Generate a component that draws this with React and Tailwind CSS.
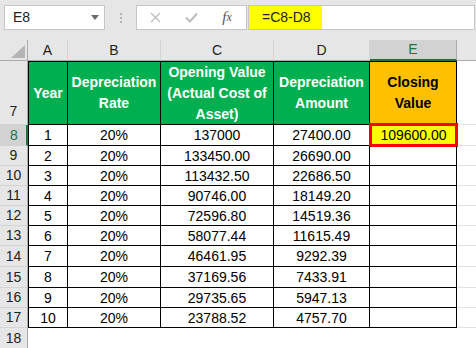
const rows = [
  ['1', '20%', '137000', '27400.00', '109600.00'],
  ['2', '20%', '133450.00', '26690.00', ''],
  ['3', '20%', '113432.50', '22686.50', ''],
  ['4', '20%', '90746.00', '18149.20', ''],
  ['5', '20%', '72596.80', '14519.36', ''],
  ['6', '20%', '58077.44', '11615.49', ''],
  ['7', '20%', '46461.95', '9292.39', ''],
  ['8', '20%', '37169.56', '7433.91', ''],
  ['9', '20%', '29735.65', '5947.13', ''],
  ['10', '20%', '23788.52', '4757.70', ''],
]

const heights = ['h-[21px]', 'h-[20px]', 'h-[20px]', 'h-[20px]', 'h-[20px]', 'h-[20px]', 'h-[21px]', 'h-[21px]', 'h-[20px]', 'h-[20px]']
const widths = ['w-[40px]', 'w-[93px]', 'w-[113px]', 'w-[96px]', 'w-[87px]']
const letters = ['A', 'B', 'C', 'D', 'E']

function Toolbar() {
  return (
    <div className="flex h-[40px] items-start bg-[#e6e6e6] pt-[5px] pl-[4px] pr-px">
      <div className="flex h-[25px] w-[101px] shrink-0 items-center justify-between border border-[#c6c6c6] bg-white pl-[8px] pr-[5px] text-[14px] text-[#222]">
        <span>E8</span>
        <svg width="8" height="5" viewBox="0 0 8 5">
          <polygon points="0,0 8,0 4,5" fill="#6a6a6a" />
        </svg>
      </div>
      <div className="flex h-[25px] w-[31px] shrink-0 flex-col items-center justify-center gap-[2px]">
        <span className="h-[2px] w-[2px] bg-[#b4b4b4]" />
        <span className="h-[2px] w-[2px] bg-[#b4b4b4]" />
        <span className="h-[2px] w-[2px] bg-[#b4b4b4]" />
      </div>
      <div className="flex h-[25px] w-[111px] shrink-0 items-center border border-[#c6c6c6] bg-white">
        <div className="flex w-[36px] justify-center">
          <svg width="11" height="11" viewBox="0 0 11 11">
            <path d="M1 1 L10 10 M10 1 L1 10" stroke="#bdbdbd" strokeWidth="1.2" />
          </svg>
        </div>
        <div className="flex w-[36px] justify-center">
          <svg width="13" height="11" viewBox="0 0 13 11">
            <path d="M1 5.5 L5 9.5 L12 1.5" stroke="#bdbdbd" strokeWidth="2" fill="none" />
          </svg>
        </div>
        <div className="flex w-[36px] justify-center font-['Liberation_Serif',serif] text-[15px] italic text-[#555]">
          <span>f</span>
          <span className="text-[12px] leading-[22px]">x</span>
        </div>
      </div>
      <div className="ml-[1px] flex h-[25px] flex-1 border border-[#c6c6c6] bg-white">
        <div className="flex w-[73px] items-center bg-[#ffff00] pl-[13px] text-[14px] text-[#222]">=C8-D8</div>
      </div>
    </div>
  )
}

function ColumnHeaders() {
  return (
    <div className="flex h-[21px] bg-[#e6e6e6] text-[14px] text-[#222]">
      <div className="flex w-[28px] shrink-0 items-end justify-end border-r border-b border-[#ababab] pr-[2px] pb-[2px]">
        <svg width="14" height="13" viewBox="0 0 14 13">
          <polygon points="14,0 14,13 0,13" fill="#b4b4b4" />
        </svg>
      </div>
      {letters.map((l, i) => (
        <div
          key={l}
          className={
            l === 'E'
              ? `${widths[i]} flex shrink-0 items-center justify-center border-r border-b-2 border-r-[#ababab] border-b-[#217346] bg-[#d2d2d2] text-[#217346]`
              : `${widths[i]} flex shrink-0 items-center justify-center border-r border-b border-r-[#d4d4d4] border-b-[#ababab]`
          }
        >
          {l}
        </div>
      ))}
      <div className="flex-1 border-b border-[#ababab]" />
    </div>
  )
}

function HeaderRow() {
  const head = [
    ['Year'],
    ['Depreciation', 'Rate'],
    ['Opening Value', '(Actual Cost of', 'Asset)'],
    ['Depreciation', 'Amount'],
    ['Closing', 'Value'],
  ]
  return (
    <div className="flex h-[64px]">
      <div className="flex w-[28px] shrink-0 items-end justify-center border-r border-b border-r-[#ababab] border-b-[#d4d4d4] bg-[#e6e6e6] pb-[2px] text-[14px] text-[#222]">
        7
      </div>
      {head.map((lines, i) => (
        <div
          key={i}
          className={`${widths[i]} flex shrink-0 flex-col items-center justify-center border-t border-r border-b border-black text-center text-[14px] font-bold leading-[21px] ${
            i === 0 ? 'border-l' : ''
          } ${i === 4 ? 'bg-[#ffc000] text-black' : 'bg-[#00b050] text-white'}`}
        >
          {lines.map((t) => (
            <span key={t} className="whitespace-nowrap">
              {t}
            </span>
          ))}
        </div>
      ))}
      <div className="flex-1 border-b border-[#e1e1e1] bg-white" />
    </div>
  )
}

export default function App() {
  return (
    <div className="h-[348px] w-[476px] overflow-hidden bg-white font-['Liberation_Sans',Arial,sans-serif]">
      <Toolbar />
      <ColumnHeaders />
      <HeaderRow />
      {rows.map((r, ri) => {
        const selected = ri === 0
        return (
          <div key={ri} className={`flex ${heights[ri]}`}>
            <div
              className={
                selected
                  ? 'flex w-[28px] shrink-0 items-center justify-center border-r-2 border-b border-r-[#217346] border-b-[#d4d4d4] bg-[#d2d2d2] pl-[2px] text-[14px] text-[#217346]'
                  : 'flex w-[28px] shrink-0 items-center justify-center border-r border-b border-r-[#ababab] border-b-[#d4d4d4] bg-[#e6e6e6] text-[14px] text-[#222]'
              }
            >
              {ri + 8}
            </div>
            {r.map((v, ci) => (
              <div
                key={ci}
                className={`${widths[ci]} relative flex shrink-0 items-center justify-center border-r border-b border-black pt-px text-[14px] text-black ${
                  ci === 0 ? 'border-l' : ''
                }`}
              >
                {ci === 4 && selected ? (
                  <div className="absolute -top-[2px] -right-[2px] -bottom-[2px] -left-[1px] flex items-center justify-center border-[3px] border-[#ff0000] bg-[#ffff00] pt-px">
                    {v}
                  </div>
                ) : (
                  v
                )}
              </div>
            ))}
            <div className="flex-1 border-b border-[#e1e1e1]" />
          </div>
        )
      })}
      <div className="flex h-[20px]">
        <div className="flex w-[28px] shrink-0 items-center justify-center border-r border-r-[#ababab] bg-[#e6e6e6] text-[14px] text-[#222]">
          18
        </div>
        <div className="flex-1" />
      </div>
    </div>
  )
}
